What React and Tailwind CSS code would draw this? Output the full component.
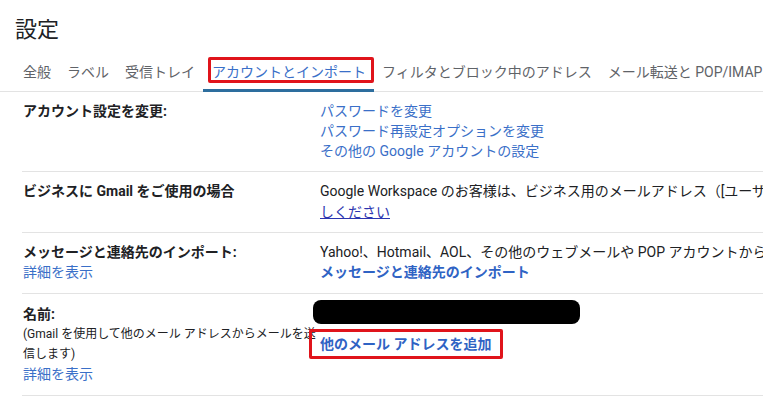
export default function App() {
  const tabs = ["全般", "ラベル", "受信トレイ", "アカウントとインポート", "フィルタとブロック中のアドレス", "メール転送と POP/IMAP"];
  return (
    <div className="w-[763px] h-[405px] overflow-hidden bg-white font-['Roboto','Noto_Sans_CJK_JP',sans-serif] text-[#202124]">
      <div className="pl-[15px] pt-[16px] text-[22px] leading-[28px] text-[#202124]">設定</div>
      <div className="flex pl-[15px] border-b border-[#e3e3e3] whitespace-nowrap">
        {tabs.map((t, i) =>
          i === 3 ? (
            <div key={t} className="relative pl-[9px] pr-[8px] pt-[18px] pb-[6px] border-b-[3px] border-[#2d6e9e] -mb-px text-[14px] leading-[20px] text-[#3a6fc8]">
              {t}
              <span className="absolute left-[5px] right-[0px] top-[13px] h-[26px] border-[3px] border-[#e0141b] rounded-[2px]" />
            </div>
          ) : (
            <div key={t} className="px-[8px] pt-[18px] pb-[9px] text-[14px] leading-[20px] text-[#5f6368]">
              {t}
            </div>
          )
        )}
      </div>

      <div className="pl-[22px]">
        {/* Row 1 */}
        <div className="flex border-b border-[#e3e3e3] pt-[9px] pb-[10px] text-[14px] leading-[20px]">
          <div className="w-[298px] shrink-0 pl-px font-bold">アカウント設定を変更:</div>
          <div className="flex flex-col text-[#3a6fc8]">
            <span>パスワードを変更</span>
            <span>パスワード再設定オプションを変更</span>
            <span>その他の Google アカウントの設定</span>
          </div>
        </div>
        {/* Row 2 */}
        <div className="flex border-b border-[#e3e3e3] pt-[9px] pb-[10px] text-[14px] leading-[20.5px]">
          <div className="w-[298px] shrink-0 pl-px font-bold">ビジネスに Gmail をご使用の場合</div>
          <div className="flex flex-col whitespace-nowrap">
            <span>Google Workspace のお客様は、ビジネス用のメールアドレス（[ユーザー名]@example.com）をご利用ください</span>
            <span className="underline text-[#2b35b0] self-start">しください</span>
          </div>
        </div>
        {/* Row 3 */}
        <div className="flex border-b border-[#e3e3e3] pt-[9px] pb-[11px] text-[14px] leading-[20px]">
          <div className="w-[298px] shrink-0 pl-px flex flex-col">
            <span className="font-bold">メッセージと連絡先のインポート:</span>
            <span className="text-[#3a6fc8]">詳細を表示</span>
          </div>
          <div className="flex flex-col whitespace-nowrap">
            <span>Yahoo!、Hotmail、AOL、その他のウェブメールや POP アカウントからインポートします。</span>
            <span className="font-bold text-[#2f63c4]">メッセージと連絡先のインポート</span>
          </div>
        </div>
        {/* Row 4 */}
        <div className="flex border-b border-[#e3e3e3] pt-[10px] pb-[10px] text-[14px] leading-[20px]">
          <div className="w-[298px] shrink-0 pl-px flex flex-col">
            <span className="font-bold">名前:</span>
            <span className="text-[12px] leading-[20px] w-[300px]">(Gmail を使用して他のメール アドレスからメールを送信します)</span>
            <span className="text-[#3a6fc8] leading-[21px]">詳細を表示</span>
          </div>
          <div className="flex flex-col items-start">
            <div className="mt-[-4px] ml-[-7px] w-[267px] h-[24px] rounded-[8px] bg-black" />
            <div className="relative mt-[10px] font-bold text-[#2f63c4] whitespace-nowrap">
              他のメール アドレスを追加
              <span className="absolute left-[-11px] right-[-12px] top-[-5px] bottom-[-5px] border-[3px] border-[#e0141b] rounded-[2px]" />
            </div>
          </div>
        </div>
      </div>
    </div>
  );
}
